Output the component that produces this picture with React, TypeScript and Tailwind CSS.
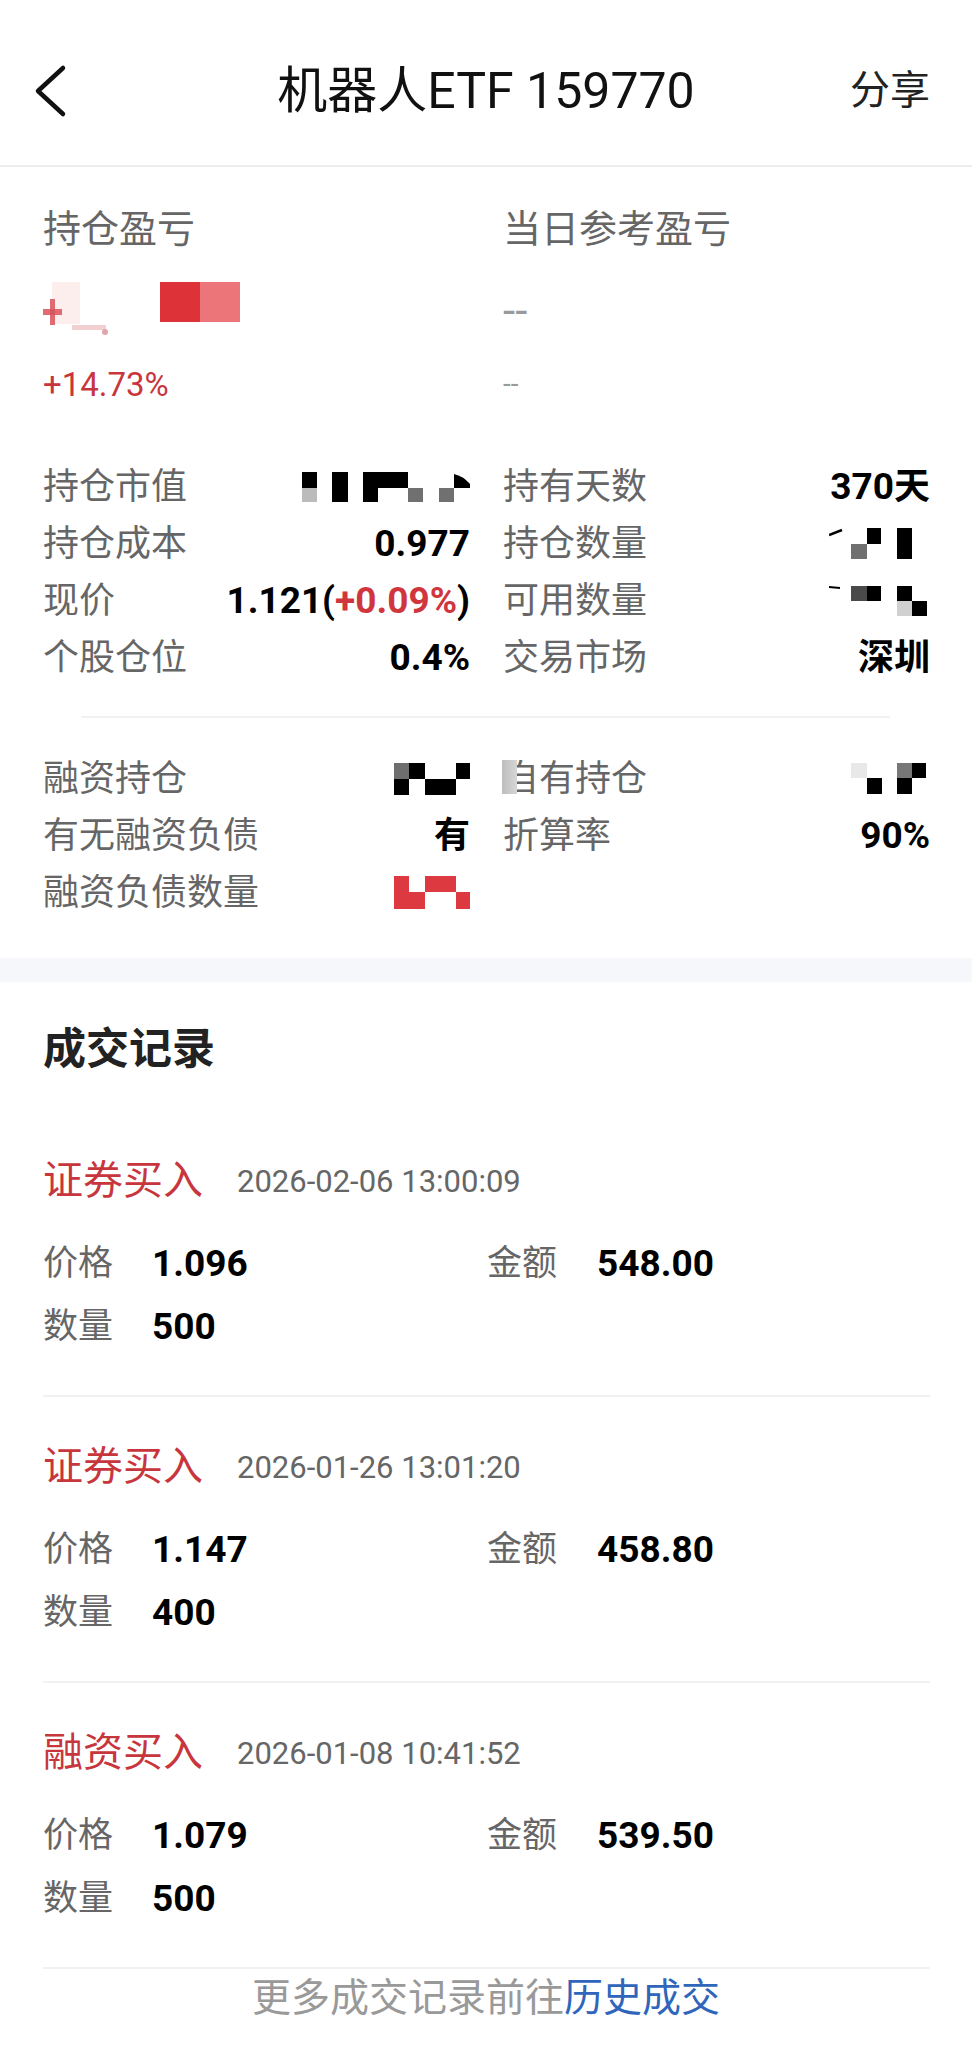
import React from 'react';

const CJK = 'font-[family-name:Roboto,Noto_Sans_CJK_SC,sans-serif]';
const NUM = 'font-[family-name:Roboto,Noto_Sans_CJK_SC,sans-serif]';

// censored values in the screenshot, drawn as pixel blocks
const MaskProfit = () => (
  <svg width="200" height="58" viewBox="0 0 200 58">
    <rect x="9" y="0" width="28" height="42" fill="#fdeeee" />
    <rect x="0" y="27" width="19" height="6" fill="#d9525a" opacity="0.85" />
    <rect x="7" y="17" width="5" height="26" fill="#d9525a" opacity="0.85" />
    <rect x="29" y="43" width="34" height="5" fill="#efc4c6" opacity="0.8" />
    <circle cx="62" cy="50" r="3" fill="#e2a4a8" />
    <rect x="117" y="0" width="40" height="40" fill="#dd3238" />
    <rect x="157" y="0" width="40" height="40" fill="#ec757a" />
  </svg>
);

const MaskMarketValue = () => (
  <svg width="170" height="30" viewBox="0 0 170 30">
    <rect x="2" y="0" width="15" height="16" fill="#000" />
    <rect x="2" y="16" width="15" height="14" fill="#bbb" />
    <rect x="32" y="0" width="16" height="30" fill="#000" />
    <rect x="63" y="0" width="45" height="16" fill="#000" />
    <rect x="63" y="16" width="15" height="14" fill="#000" />
    <rect x="108" y="16" width="15" height="14" fill="#707070" />
    <rect x="139" y="16" width="15" height="14" fill="#707070" />
    <path d="M154 2 Q163 4 170 12 L170 16 L154 16 Z" fill="#000" />
  </svg>
);

const MaskHolding = () => (
  <svg width="101" height="31" viewBox="0 0 101 31">
    <path d="M0 7 L13 2" stroke="#000" strokeWidth="2.5" />
    <rect x="38" y="0" width="14" height="16" fill="#000" />
    <rect x="22" y="16" width="16" height="15" fill="#707070" />
    <rect x="68" y="0" width="15" height="31" fill="#000" />
  </svg>
);

const MaskAvailable = () => (
  <svg width="101" height="30" viewBox="0 0 101 30">
    <path d="M0 1 L11 2" stroke="#000" strokeWidth="2" />
    <rect x="22" y="0" width="16" height="15" fill="#4a4a4a" />
    <rect x="38" y="0" width="14" height="15" fill="#000" />
    <rect x="68" y="0" width="15" height="15" fill="#000" />
    <rect x="68" y="15" width="15" height="15" fill="#d0d0d0" />
    <rect x="83" y="15" width="15" height="15" fill="#000" />
  </svg>
);

const MaskMargin = () => (
  <svg width="76" height="32" viewBox="0 0 76 32">
    <rect x="0" y="0" width="15" height="16" fill="#6e6e6e" />
    <rect x="0" y="16" width="15" height="16" fill="#000" />
    <rect x="15" y="0" width="16" height="16" fill="#000" />
    <rect x="31" y="16" width="31" height="16" fill="#000" />
    <rect x="62" y="0" width="14" height="16" fill="#000" />
  </svg>
);

const MaskOwn = () => (
  <svg width="79" height="31" viewBox="0 0 79 31">
    <rect x="0" y="0" width="16" height="15" fill="#e8e8e8" />
    <rect x="16" y="15" width="15" height="16" fill="#000" />
    <rect x="46" y="0" width="15" height="15" fill="#777" />
    <rect x="61" y="0" width="14" height="15" fill="#000" />
    <rect x="46" y="15" width="15" height="16" fill="#000" />
  </svg>
);

const MaskDebt = () => (
  <svg width="76" height="33" viewBox="0 0 76 33">
    <rect x="0" y="0" width="15" height="33" fill="#dc3a40" />
    <rect x="15" y="16" width="16" height="17" fill="#dc3a40" />
    <rect x="31" y="0" width="31" height="16" fill="#dc3a40" />
    <rect x="62" y="16" width="14" height="17" fill="#dc3a40" />
  </svg>
);

const num = `${NUM} text-[37px] font-bold text-black leading-none`;
const cjkBold = `${CJK} text-[36px] font-bold text-black leading-none`;

interface Cell {
  label: React.ReactNode;
  value: React.ReactNode;
}

const holdingRows: Cell[] = [
  { label: '持仓市值', value: <MaskMarketValue /> },
  { label: '持有天数', value: <span className={num}>370<span className={cjkBold}>天</span></span> },
  { label: '持仓成本', value: <span className={num}>0.977</span> },
  { label: '持仓数量', value: <MaskHolding /> },
  {
    label: '现价',
    value: (
      <span className={num}>
        1.121(<span className="text-[#d0363e]">+0.09%</span>)
      </span>
    ),
  },
  { label: '可用数量', value: <MaskAvailable /> },
  { label: '个股仓位', value: <span className={num}>0.4%</span> },
  { label: '交易市场', value: <span className={cjkBold}>深圳</span> },
];

const marginRows: Cell[] = [
  { label: '融资持仓', value: <MaskMargin /> },
  {
    label: (
      <span className="relative">
        自有持仓
        <span className="absolute left-[-1px] top-[2px] w-[15px] h-[34px] bg-gradient-to-r from-[#bdbdbd] to-[#d6d6d6]" />
      </span>
    ),
    value: <MaskOwn />,
  },
  { label: '有无融资负债', value: <span className={cjkBold}>有</span> },
  { label: '折算率', value: <span className={num}>90%</span> },
  { label: '融资负债数量', value: <MaskDebt /> },
  { label: '', value: null },
];

interface Trade {
  type: string;
  time: string;
  price: string;
  amount: string;
  qty: string;
}

const trades: Trade[] = [
  { type: '证券买入', time: '2026-02-06 13:00:09', price: '1.096', amount: '548.00', qty: '500' },
  { type: '证券买入', time: '2026-01-26 13:01:20', price: '1.147', amount: '458.80', qty: '400' },
  { type: '融资买入', time: '2026-01-08 10:41:52', price: '1.079', amount: '539.50', qty: '500' },
];

function InfoGrid({ rows }: { rows: Cell[] }) {
  return (
    <div className="grid grid-cols-2 gap-x-[33px]">
      {rows.map((row, i) => (
        <div key={i} className="h-[57px] flex items-center justify-between">
          <span className={`${CJK} text-[36px] text-[#666] leading-none`}>{row.label}</span>
          {row.value}
        </div>
      ))}
    </div>
  );
}

function TradeItem({ trade, first }: { trade: Trade; first: boolean }) {
  return (
    <div className={`${first ? 'mt-[32px]' : ''} pt-[40px] pb-[37px] border-b-2 border-[#f1f1f1]`}>
      <div className="h-[60px] flex items-center gap-[34px]">
        <span className={`${CJK} text-[40px] text-[#c8363d] leading-none`}>{trade.type}</span>
        <span className={`${NUM} text-[31px] text-[#666] leading-none`}>{trade.time}</span>
      </div>
      <div className="mt-[21px] grid grid-cols-[444px_1fr]">
        <div className="h-[63px] flex items-center">
          <span className={`${CJK} w-[109px] text-[35px] text-[#666] leading-none`}>价格</span>
          <span className={num}>{trade.price}</span>
        </div>
        <div className="h-[63px] flex items-center">
          <span className={`${CJK} w-[110px] text-[35px] text-[#666] leading-none`}>金额</span>
          <span className={num}>{trade.amount}</span>
        </div>
        <div className="h-[63px] flex items-center">
          <span className={`${CJK} w-[109px] text-[35px] text-[#666] leading-none`}>数量</span>
          <span className={num}>{trade.qty}</span>
        </div>
      </div>
    </div>
  );
}

export default function App() {
  return (
    <div className={`${CJK} w-full min-h-[2048px] bg-white`}>
      {/* Header */}
      <div className="h-[167px] pt-[16px] border-b-2 border-[#ededed] grid grid-cols-[1fr_auto_1fr] items-center px-[42px]">
        <svg className="-ml-[9px]" width="36" height="54" viewBox="0 0 36 54" fill="none">
          <polyline points="30,4 5,27 30,50" stroke="#111" strokeWidth="4.5" strokeLinecap="round" strokeLinejoin="round" />
        </svg>
        <h1 className="text-[50px] text-[#111] leading-none font-normal">机器人ETF 159770</h1>
        <span className="justify-self-end text-[40px] text-[#222] leading-none">分享</span>
      </div>

      {/* Position summary */}
      <div className="pl-[43px] pr-[42px] pb-[37px]">
        <div className="grid grid-cols-2 gap-x-[33px]">
          <div>
            <div className="mt-[37px] h-[50px] flex items-center text-[38px] text-[#666] leading-none">持仓盈亏</div>
            <div className="mt-[14px] h-[86px] flex items-center">
              <MaskProfit />
            </div>
            <div className={`${NUM} h-[60px] flex items-center text-[33px] text-[#c8363d] leading-none`}>+14.73%</div>
          </div>
          <div>
            <div className="mt-[37px] h-[50px] flex items-center text-[38px] text-[#666] leading-none">当日参考盈亏</div>
            <div className={`${NUM} mt-[14px] h-[86px] flex items-center text-[44px] text-[#9a9a9a] leading-none`}>--</div>
            <div className={`${NUM} h-[60px] flex items-center text-[28px] text-[#9a9a9a] leading-none`}>--</div>
          </div>
        </div>

        <div className="mt-[44px]">
          <InfoGrid rows={holdingRows} />
        </div>

        <div className="mt-[30px] ml-[38px] mr-[40px] h-[2px] bg-[#f1f1f1]" />

        <div className="mt-[32px]">
          <InfoGrid rows={marginRows} />
        </div>
      </div>

      <div className="h-[24px] bg-[#f5f7fa]" />

      {/* Trade records */}
      <div className="pl-[43px] pr-[42px]">
        <div className="mt-[37px] h-[60px] flex items-center text-[43px] font-bold text-[#222] leading-none">成交记录</div>
        {trades.map((t, i) => (
          <TradeItem key={i} trade={t} first={i === 0} />
        ))}
      </div>

      <div className="h-[58px] flex items-center justify-center text-[39px] text-[#999] leading-none">
        更多成交记录前往<span className="text-[#2f66bb]">历史成交</span>
      </div>
    </div>
  );
}
